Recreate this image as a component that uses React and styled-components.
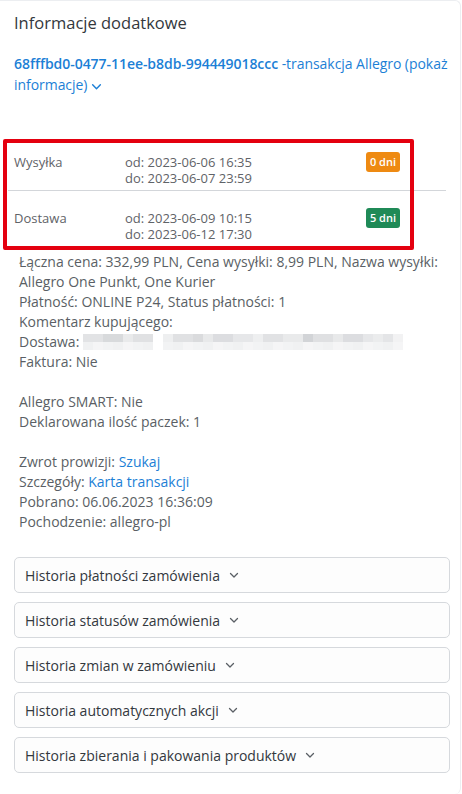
import React from "react";
import styled, { createGlobalStyle } from "styled-components";

const GlobalStyle = createGlobalStyle`
  html, body {
    margin: 0;
    padding: 0;
    background: #ffffff;
  }
  body {
    font-family: "Open Sans", "Noto Sans", sans-serif;
    font-size: 14px;
    color: #555b61;
  }
`;

const Card = styled.div`
  position: relative;
  width: 461px;
  min-height: 794px;
  box-sizing: border-box;
  border-top: 1px solid #eceef1;
  border-right: 1px solid #eceef1;
  border-radius: 0 6px 6px 0;
  padding: 10px 10px 20px 14px;
`;

const Title = styled.h3`
  margin: 0;
  font-size: 16.5px;
  font-weight: 500;
  line-height: 24px;
  color: #33383d;
`;

const TxLine = styled.div`
  margin-top: 18px;
  line-height: 21px;
  color: #1c7fd6;
  letter-spacing: -0.05px;
`;

const Uuid = styled.span`
  font-weight: 600;
`;

const ChevronIcon = ({ size = 10, color = "currentColor" }) => (
  <svg
    width={size}
    height={size}
    viewBox="0 0 10 10"
    style={{ display: "inline-block", verticalAlign: "middle" }}
  >
    <path d="M1.5 3.5 L5 7 L8.5 3.5" fill="none" stroke={color} strokeWidth="1.3" strokeLinecap="round" strokeLinejoin="round" />
  </svg>
);

const Dates = styled.div`
  margin-top: 40px;
  margin-left: -6px;
  width: 438px;
`;

const DateRow = styled.div`
  display: grid;
  grid-template-columns: 111px 1fr auto;
  align-items: start;
  padding: 14px 46px 4px 6px;
  border-top: ${(p) => (p.$divider ? "1px solid #d3d6da" : "none")};
  color: #5f6368;
  font-size: 13px;
  line-height: 16px;
`;

const Label = styled.div`
  padding-top: 5px;
`;

const Range = styled.div`
  padding-top: 5px;
`;

const Badge = styled.span`
  display: inline-block;
  margin-top: 3px;
  height: 20px;
  line-height: 20px;
  padding: 0 4px;
  border-radius: 3px;
  font-size: 11px;
  font-weight: 600;
  color: #ffffff;
  background: ${(p) => p.$bg};
`;

const Details = styled.div`
  margin-top: 6px;
  padding-left: 5px;
  line-height: 20px;
  color: #5a5f65;
`;

const Line = styled.div``;

const Gap = styled.div`
  height: 20px;
`;

const Link = styled.a`
  color: #1c7fd6;
  text-decoration: none;
`;

const Blur = styled.span`
  display: inline-grid;
  grid-template-columns: repeat(33, 10px);
  grid-template-rows: 8px 8px;
  vertical-align: middle;
  margin-left: 4px;
  margin-top: -3px;
`;

const Cell = styled.span`
  background: ${(p) => p.$c};
`;

const Accordion = styled.div`
  margin-top: 25px;
  display: flex;
  flex-direction: column;
  gap: 9px;
`;

const AccItem = styled.button`
  display: flex;
  align-items: center;
  gap: 9px;
  height: 36px;
  box-sizing: border-box;
  padding: 0 10px;
  border: 1px solid #d6d9dd;
  border-radius: 5px;
  background: #fdfdfd;
  font-family: "Open Sans", "Noto Sans", sans-serif;
  font-size: 14px;
  color: #33383d;
  text-align: left;
  cursor: pointer;
`;

const Highlight = styled.div`
  position: absolute;
  left: 3px;
  top: 138px;
  width: 403px;
  height: 103px;
  border: 4px solid #e4000f;
  border-radius: 2px;
  pointer-events: none;
`;

const topShades = [
  "#e2e3e5", "#e2e3e5", "#d8dadc", "#d8dadc", "#e9eaeb", "#e0e1e3", "#e0e1e3", "#ffffff",
  "#eeeff0", "#e0e1e3", "#e0e1e3", "#dadbdd", "#e8e9ea", "#dcdde0", "#dcdde0", "#e6e7e9",
  "#e6e7e9", "#eeeff0", "#e1e2e4", "#e1e2e4", "#e9eaeb", "#e9eaeb", "#d2d4d7", "#dfe0e2",
  "#dfe0e2", "#e8e9ea", "#dcdde0", "#dcdde0", "#e6e7e9", "#ebeced", "#e4e5e7", "#f2f2f3",
  "#ffffff",
];

const bottomShades = topShades.map((c, i) =>
  c === "#ffffff" ? "#ffffff" : i % 3 === 0 ? "#f0f1f2" : i % 3 === 1 ? "#f5f5f6" : "#f2f3f4"
);

const accItems = [
  "Historia płatności zamówienia",
  "Historia statusów zamówienia",
  "Historia zmian w zamówieniu",
  "Historia automatycznych akcji",
  "Historia zbierania i pakowania produktów",
];

export default function App() {
  return (
    <>
      <GlobalStyle />
      <Card>
        <Title>Informacje dodatkowe</Title>
        <TxLine>
          <Uuid>68fffbd0-0477-11ee-b8db-994449018ccc</Uuid> -transakcja Allegro (pokaż
          informacje) <ChevronIcon size={11} />
        </TxLine>

        <Dates>
          <DateRow>
            <Label>Wysyłka</Label>
            <Range>
              od: 2023-06-06 16:35
              <br />
              do: 2023-06-07 23:59
            </Range>
            <Badge $bg="#ee8a12">0 dni</Badge>
          </DateRow>
          <DateRow $divider>
            <Label>Dostawa</Label>
            <Range>
              od: 2023-06-09 10:15
              <br />
              do: 2023-06-12 17:30
            </Range>
            <Badge $bg="#1f8a57">5 dni</Badge>
          </DateRow>
        </Dates>

        <Details>
          <Line>Łączna cena: 332,99 PLN, Cena wysyłki: 8,99 PLN, Nazwa wysyłki: Allegro One Punkt, One Kurier</Line>
          <Line>Płatność: ONLINE P24, Status płatności: 1</Line>
          <Line>Komentarz kupującego:</Line>
          <Line>
            Dostawa:
            <Blur>
              {topShades.map((c, i) => (
                <Cell key={"t" + i} $c={c} />
              ))}
              {bottomShades.map((c, i) => (
                <Cell key={"b" + i} $c={c} />
              ))}
            </Blur>
          </Line>
          <Line>Faktura: Nie</Line>
          <Gap />
          <Line>Allegro SMART: Nie</Line>
          <Line>Deklarowana ilość paczek: 1</Line>
          <Gap />
          <Line>
            Zwrot prowizji: <Link href="#">Szukaj</Link>
          </Line>
          <Line>
            Szczegóły: <Link href="#">Karta transakcji</Link>
          </Line>
          <Line>Pobrano: 06.06.2023 16:36:09</Line>
          <Line>Pochodzenie: allegro-pl</Line>
        </Details>

        <Accordion>
          {accItems.map((t) => (
            <AccItem key={t}>
              {t}
              <ChevronIcon size={10} color="#5a5f65" />
            </AccItem>
          ))}
        </Accordion>

        <Highlight />
      </Card>
    </>
  );
}
